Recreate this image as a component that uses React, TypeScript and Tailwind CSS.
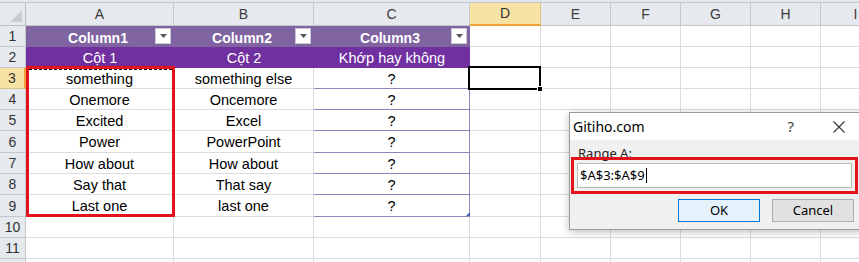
import React from "react";

const cols = [
  { l: "A", w: "w-[148px]" },
  { l: "B", w: "w-[140px]" },
  { l: "C", w: "w-[156px]" },
  { l: "D", w: "w-[71px]" },
  { l: "E", w: "w-[70px]" },
  { l: "F", w: "w-[70px]" },
  { l: "G", w: "w-[70px]" },
  { l: "H", w: "w-[70px]" },
  { l: "I", w: "w-[70px]" },
];

const rowH = [
  "h-[21px]",
  "h-[21px]",
  "h-[21px]",
  "h-[21px]",
  "h-[21px]",
  "h-[22px]",
  "h-[21px]",
  "h-[21px]",
  "h-[22px]",
  "h-[21px]",
  "h-[21px]",
  "h-[21px]",
];

const data: [string, string][] = [
  ["something", "something else"],
  ["Onemore", "Oncemore"],
  ["Excited", "Excel"],
  ["Power", "PowerPoint"],
  ["How about", "How about"],
  ["Say that", "That say"],
  ["Last one", "last one"],
];

function Drop() {
  return (
    <div className="absolute right-[3px] top-[2px] w-[16px] h-[16px] bg-white border border-[#c9c9d6] flex items-center justify-center">
      <svg width="7" height="4" viewBox="0 0 7 4">
        <path d="M0 0h7L3.5 4z" fill="#555" />
      </svg>
    </div>
  );
}

function Cell({ r, c }: { r: number; c: number }) {
  const col = cols[c];
  const base = `${col.w} shrink-0 relative flex items-center justify-center text-[14.5px] leading-none pt-[2px]`;
  if (c <= 2 && r === 1) {
    const t = ["Column1", "Column2", "Column3"][c];
    return (
      <div className={`${base} bg-[#8064a2] text-white font-bold text-[14px]`}>
        <span className="pr-[4px]">{t}</span>
        <Drop />
      </div>
    );
  }
  if (c <= 2 && r === 2) {
    const t = ["Cột 1", "Cột 2", "Khớp hay không"][c];
    return <div className={`${base} bg-[#7030a0] text-white`}>{t}</div>;
  }
  if (c <= 2 && r >= 3 && r <= 9) {
    const t = c === 2 ? "?" : data[r - 3][c];
    const right = c === 2 ? "border-r border-[#8b86bd]" : "border-r border-[#dcdce2]";
    return (
      <div className={`${base} bg-white text-black border-b border-[#8b86bd] ${right}`}>
        {t}
      </div>
    );
  }
  return <div className={`${base} border-r border-b border-[#dadcdd]`} />;
}

export default function App() {
  return (
    <div className="relative w-[859px] h-[262px] overflow-hidden bg-white font-['Liberation_Sans',Arial,sans-serif] text-[#333]">
      <div className="h-[3px] bg-[#e3e6ea] border-b border-[#c3c8ce]" />
      {/* column header row */}
      <div className="flex h-[23px]">
        <div className="w-[26px] shrink-0 bg-[#e6e9ed] border-r border-b border-[#b9bec5] relative">
          <svg className="absolute right-[3px] bottom-[3px]" width="12" height="12" viewBox="0 0 12 12">
            <path d="M12 0V12H0z" fill="#c8ccd1" />
          </svg>
        </div>
        {cols.map((c) => (
          <div
            key={c.l}
            className={`${c.w} shrink-0 flex items-center justify-center text-[14px] border-r ${
              c.l === "D"
                ? "bg-[#f8e2a4] border-b-2 border-b-[#f2a03a] border-r-[#d9c48c] text-[#333]"
                : "bg-[#e6e9ed] border-b border-[#c3c8ce] text-[#3c3c3c]"
            }`}
          >
            {c.l}
          </div>
        ))}
      </div>
      {rowH.map((h, i) => {
        const r = i + 1;
        return (
          <div key={r} className={`flex ${h}`}>
            <div
              className={`w-[26px] shrink-0 flex items-center justify-center text-[14px] pt-[1px] border-r border-b ${
                r === 3
                  ? "bg-[#f8e2a4] border-r-2 border-r-[#f2a03a] border-b-[#d9c48c]"
                  : "bg-[#e6e9ed] border-[#c3c8ce]"
              }`}
            >
              {r <= 11 ? r : ""}
            </div>
            {cols.map((_, c) => (
              <Cell key={c} r={r} c={c} />
            ))}
          </div>
        );
      })}

      {/* table resize handle */}
      <svg className="absolute left-[466px] top-[212px]" width="4" height="4" viewBox="0 0 4 4">
        <path d="M4 0V4H0z" fill="#3b5cb8" />
      </svg>

      {/* selected cell D3 */}
      <div className="absolute left-[468px] top-[66px] w-[73px] h-[24px] border-2 border-black">
        <div className="absolute right-[-4px] bottom-[-4px] w-[6px] h-[6px] bg-black border border-white" />
      </div>

      {/* red box A3:A9 */}
      <div className="absolute left-[26px] top-[66px] w-[149px] h-[151px] border-[3px] border-[#e3131b]">
        <div className="border-t border-dashed border-black" />
      </div>

      {/* dialog */}
      <div className="absolute left-[569px] top-[112px] w-[300px] h-[118px] bg-[#f0f0f0] border border-[#9a9a9a] shadow-[0_2px_8px_rgba(0,0,0,0.25)] font-['Noto_Sans',sans-serif] text-black">
        <div className="h-[27px] bg-white flex items-center">
          <span className="pl-[3px] text-[14px]">Gitiho.com</span>
          <span className="ml-auto mr-[39px] text-[15px] text-[#444]">?</span>
          <svg className="mr-[23px]" width="12" height="12" viewBox="0 0 12 12">
            <path d="M0.5 0.5L11.5 11.5M11.5 0.5L0.5 11.5" stroke="#333" strokeWidth="1.1" />
          </svg>
        </div>
        <div className="pl-[8px] pt-[5px] text-[13px] leading-[16px] text-[#222]">Range A:</div>
        <div className="absolute left-[1px] top-[44px] w-[287px] h-[37px] border-[3px] border-[#e3131b] p-[3px]">
          <div className="h-full bg-white border border-[#b9b9b9] flex items-center pl-[2px] text-[13px]">
            <span>$A$3:$A$9</span>
            <span className="w-px h-[15px] bg-black ml-[1px]" />
          </div>
        </div>
        <div className="absolute left-[108px] top-[86px] w-[82px] h-[23px] bg-[#e5f1fb] border border-[#0078d7] flex items-center justify-center text-[13px]">
          OK
        </div>
        <div className="absolute left-[202px] top-[86px] w-[82px] h-[23px] bg-[#e1e1e1] border border-[#adadad] flex items-center justify-center text-[13px]">
          Cancel
        </div>
      </div>
    </div>
  );
}
